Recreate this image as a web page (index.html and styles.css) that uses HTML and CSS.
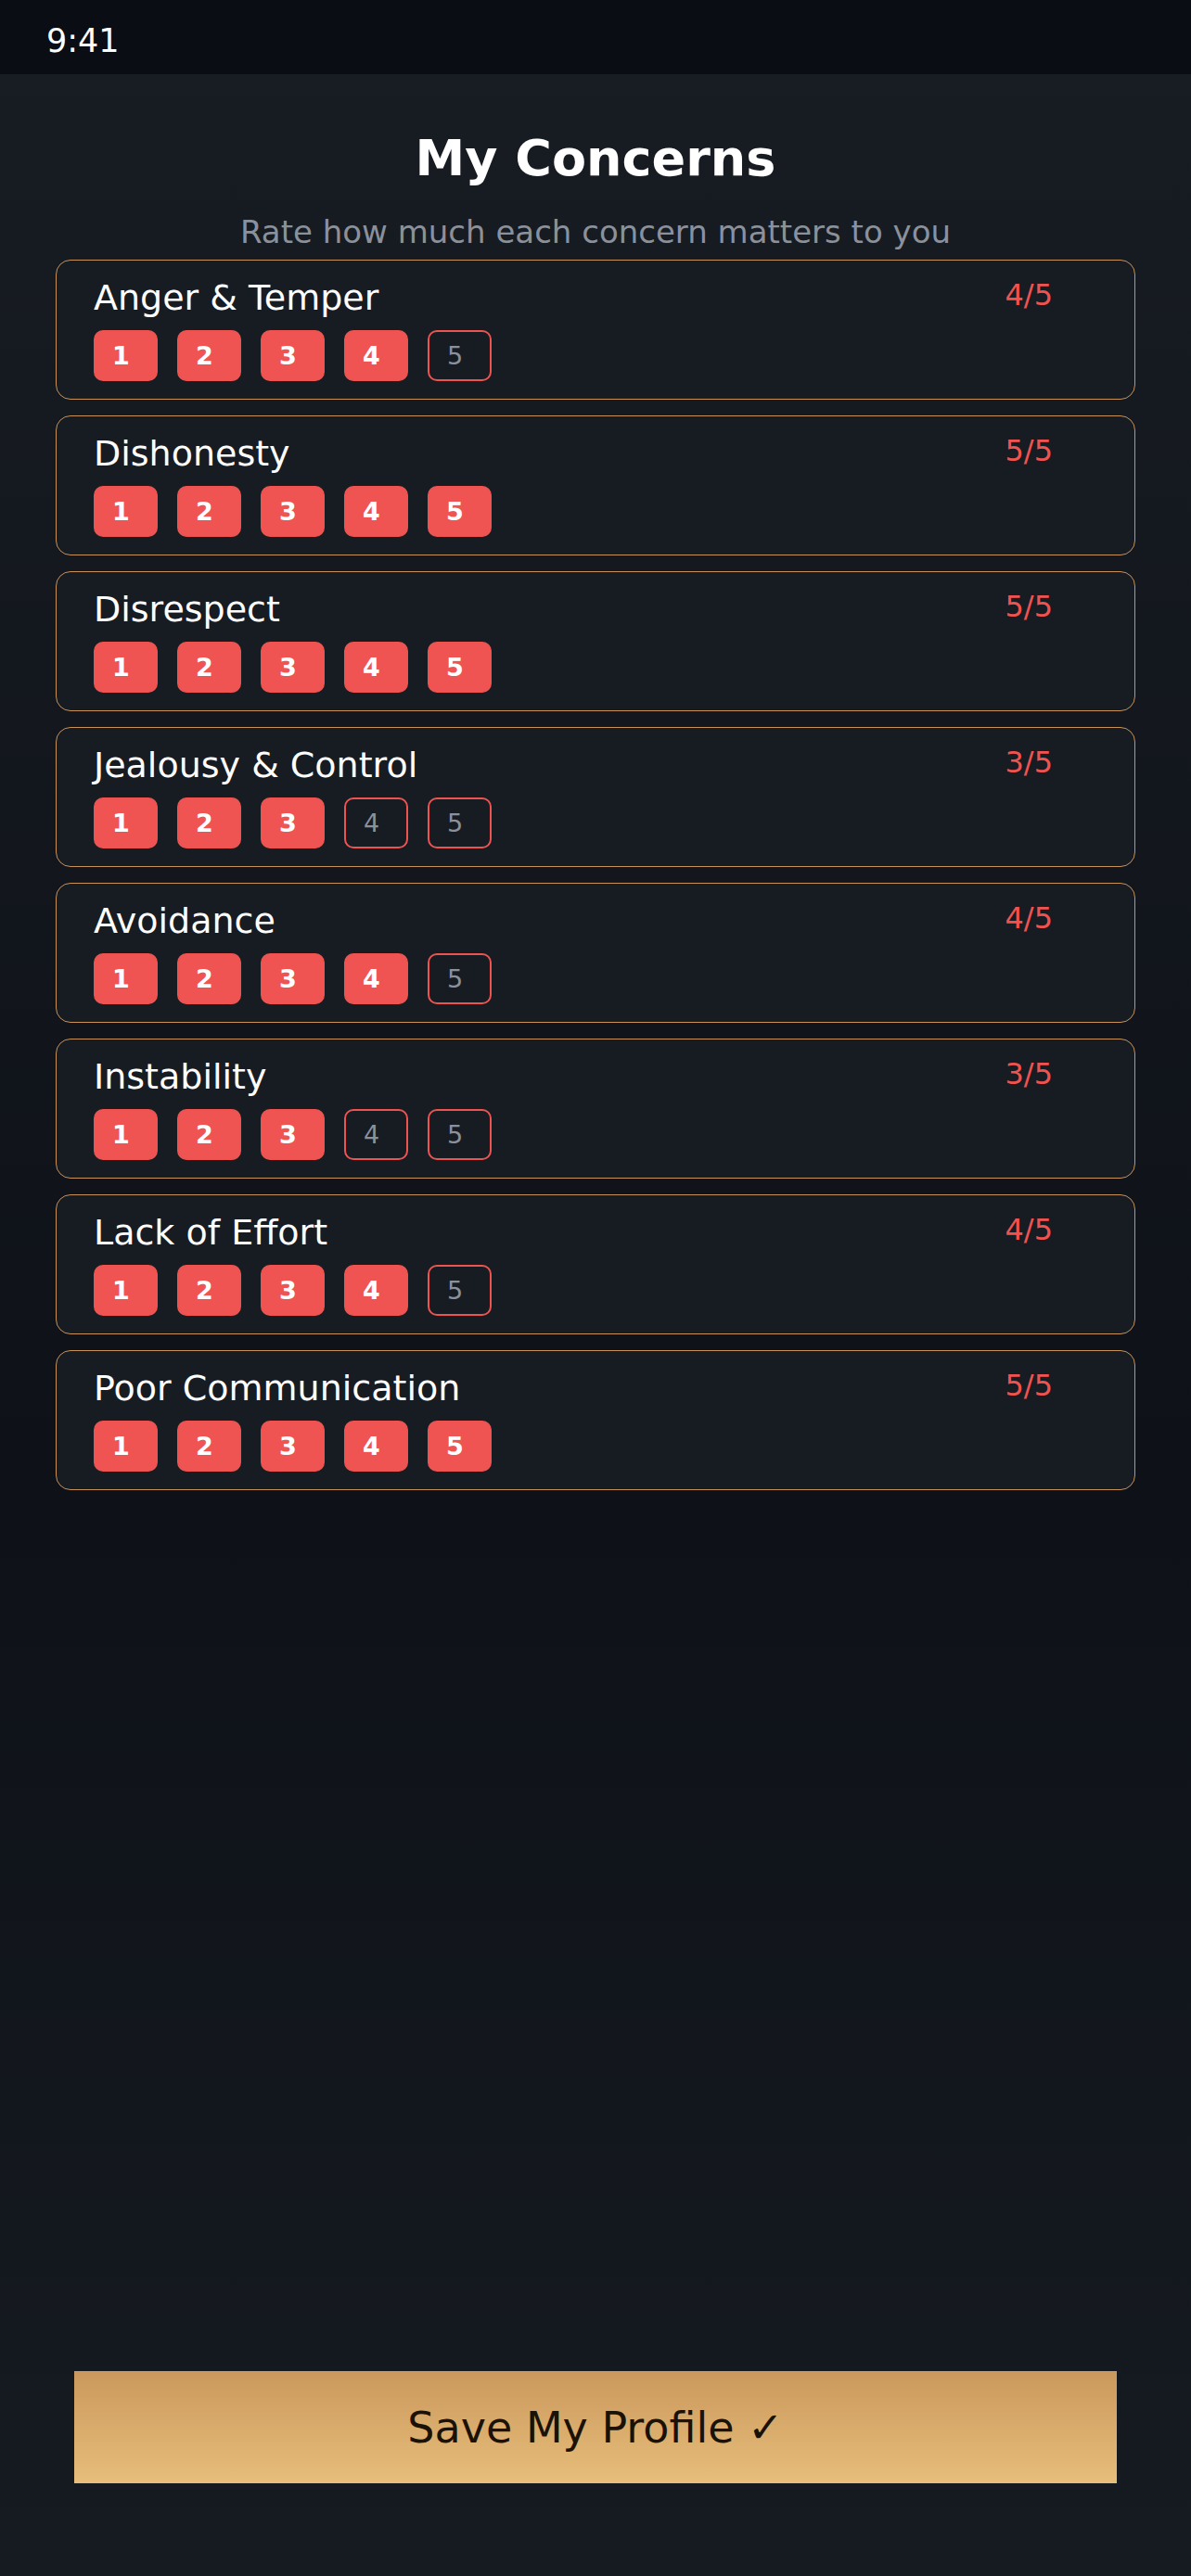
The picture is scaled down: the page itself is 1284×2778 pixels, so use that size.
FILE: index.html
```html
<!DOCTYPE html>
<html lang="en">
<head>
    <meta charset="UTF-8">
    <meta name="viewport" content="width=device-width, initial-scale=1.0">
    <title>My Concerns</title>
    <link rel="stylesheet" href="styles.css">
</head>
<body>
    <div class="status-bar">9:41</div>

    <div class="page">
        <h1>My Concerns</h1>
        <p class="subtitle">Rate how much each concern matters to you</p>

        <div class="card-list">
            <div class="card">
                <div class="card-head">
                    <span class="card-title">Anger &amp; Temper</span>
                    <span class="rating">4/5</span>
                </div>
                <div class="scale">
                    <button class="pip on">1</button>
                    <button class="pip on">2</button>
                    <button class="pip on">3</button>
                    <button class="pip on">4</button>
                    <button class="pip">5</button>
                </div>
            </div>

            <div class="card">
                <div class="card-head">
                    <span class="card-title">Dishonesty</span>
                    <span class="rating">5/5</span>
                </div>
                <div class="scale">
                    <button class="pip on">1</button>
                    <button class="pip on">2</button>
                    <button class="pip on">3</button>
                    <button class="pip on">4</button>
                    <button class="pip on">5</button>
                </div>
            </div>

            <div class="card">
                <div class="card-head">
                    <span class="card-title">Disrespect</span>
                    <span class="rating">5/5</span>
                </div>
                <div class="scale">
                    <button class="pip on">1</button>
                    <button class="pip on">2</button>
                    <button class="pip on">3</button>
                    <button class="pip on">4</button>
                    <button class="pip on">5</button>
                </div>
            </div>

            <div class="card">
                <div class="card-head">
                    <span class="card-title">Jealousy &amp; Control</span>
                    <span class="rating">3/5</span>
                </div>
                <div class="scale">
                    <button class="pip on">1</button>
                    <button class="pip on">2</button>
                    <button class="pip on">3</button>
                    <button class="pip">4</button>
                    <button class="pip">5</button>
                </div>
            </div>

            <div class="card">
                <div class="card-head">
                    <span class="card-title">Avoidance</span>
                    <span class="rating">4/5</span>
                </div>
                <div class="scale">
                    <button class="pip on">1</button>
                    <button class="pip on">2</button>
                    <button class="pip on">3</button>
                    <button class="pip on">4</button>
                    <button class="pip">5</button>
                </div>
            </div>

            <div class="card">
                <div class="card-head">
                    <span class="card-title">Instability</span>
                    <span class="rating">3/5</span>
                </div>
                <div class="scale">
                    <button class="pip on">1</button>
                    <button class="pip on">2</button>
                    <button class="pip on">3</button>
                    <button class="pip">4</button>
                    <button class="pip">5</button>
                </div>
            </div>

            <div class="card">
                <div class="card-head">
                    <span class="card-title">Lack of Effort</span>
                    <span class="rating">4/5</span>
                </div>
                <div class="scale">
                    <button class="pip on">1</button>
                    <button class="pip on">2</button>
                    <button class="pip on">3</button>
                    <button class="pip on">4</button>
                    <button class="pip">5</button>
                </div>
            </div>

            <div class="card">
                <div class="card-head">
                    <span class="card-title">Poor Communication</span>
                    <span class="rating">5/5</span>
                </div>
                <div class="scale">
                    <button class="pip on">1</button>
                    <button class="pip on">2</button>
                    <button class="pip on">3</button>
                    <button class="pip on">4</button>
                    <button class="pip on">5</button>
                </div>
            </div>
        </div>
    </div>

    <footer>
        <button class="save-btn">Save My Profile ✓</button>
    </footer>
</body>
</html>
```

FILE: styles.css
```css
body {
    font-family: 'DejaVu Sans', 'Liberation Sans', sans-serif;
    background: linear-gradient(180deg, #181c23 0%, #0e1118 58%, #161a21 100%);
    margin: 0;
    padding: 0;
    min-height: 100vh;
    display: flex;
    flex-direction: column;
    color: #fff;
}
.status-bar {
    height: 80px;
    box-sizing: border-box;
    padding: 24px 50px 0;
    background-color: #0a0d14;
    font-size: 35px;
    line-height: 41px;
}
.page {
    padding: 0 60px;
}
h1 {
    margin: 59px 0 0;
    text-align: center;
    font-size: 54px;
    line-height: 64px;
    font-weight: bold;
}
.subtitle {
    margin: 27px 0 0;
    text-align: center;
    font-size: 34px;
    line-height: 40px;
    color: #8b919b;
}
.card-list {
    margin-top: 10px;
    display: flex;
    flex-direction: column;
    gap: 17px;
}
.card {
    background: #171b22;
    border: 1px solid #c99356;
    border-radius: 16px;
    padding: 19px 40px;
}
.card-head {
    display: flex;
    justify-content: space-between;
    align-items: flex-start;
}
.card-title {
    font-size: 38px;
    line-height: 43px;
}
.rating {
    font-size: 32px;
    line-height: 37px;
    color: #ef5350;
    margin-right: 48px;
}
.scale {
    display: flex;
    gap: 21px;
    margin-top: 13px;
}
.pip {
    width: 69px;
    height: 55px;
    box-sizing: border-box;
    padding: 0 10px 0 0;
    border: 2px solid #ef5350;
    border-radius: 10px;
    background: transparent;
    font-family: inherit;
    font-size: 27px;
    color: #8b919b;
    text-align: center;
}
.pip.on {
    background: #ef5453;
    color: #fff;
    font-weight: bold;
}
footer {
    margin-top: auto;
    padding: 0 80px 100px;
}
.save-btn {
    display: block;
    width: 100%;
    height: 121px;
    border: none;
    border-radius: 0;
    background: linear-gradient(180deg, #ca985c, #e7be7b);
    color: #1b1207;
    font-family: inherit;
    font-size: 46px;
}
```
